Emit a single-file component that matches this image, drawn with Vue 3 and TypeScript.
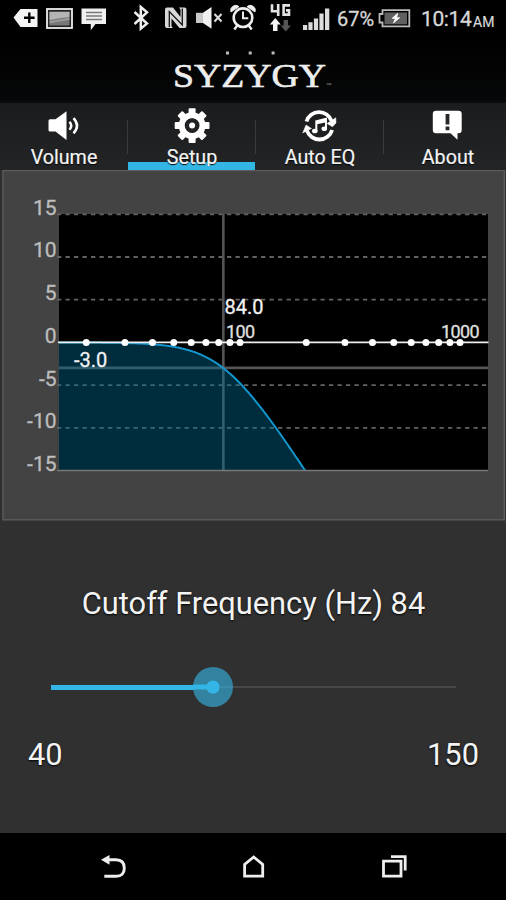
<script setup lang="ts">
import { ref, computed } from 'vue'

const cutoff = ref(84)
const minHz = 40
const maxHz = 150
const fraction = computed(() => (cutoff.value - minHz) / (maxHz - minHz))

const tabs = ['Volume', 'Setup', 'Auto EQ', 'About']
const active = 'Setup'

const plot = { left: 59, right: 488, top: 214, bottom: 470 }
const zeroY = 342.4
const xOf = (hz: number) => 240 + 220 * Math.log10(hz / 100)
const yOf = (db: number) => zeroY - db * 8.54

const levels = [15, 10, 5, 0, -5, -10, -15]
const dashed = [15, 10, 5, -5, -10]
const ticks = [20, 30, 40, 50, 60, 70, 80, 90, 100, 200, 300, 400, 500, 600, 700, 800, 900, 1000]

// Second-order low-pass magnitude in dB
const gain = (hz: number) => -10 * Math.log10(1 + Math.pow(hz / cutoff.value, 4))

const curve = computed(() => {
  const points: string[] = []
  for (let x = plot.left; x <= plot.right; x += 1) {
    const y = yOf(gain(100 * Math.pow(10, (x - 240) / 220)))
    if (y > plot.bottom) {
      points.push(`305.3,${plot.bottom}`)
      break
    }
    points.push(`${x},${y.toFixed(2)}`)
  }
  return points.join(' ')
})
const area = computed(() => `${plot.left},${plot.bottom} ${curve.value}`)
</script>

<template>
  <div class="screen">
    <div class="status">
      <svg class="tag" viewBox="13 0 26 38" width="26" height="38">
        <path d="M13.5 17.6 20.5 9H37.5V27H20.5Z" fill="#f4f4f4" />
        <path d="M29.3 12.5v10.6M24 17.8h10.6" stroke="#000" stroke-width="2.4" />
      </svg>
      <svg class="photo" viewBox="46 0 27 38" width="27" height="38">
        <rect x="47" y="9" width="25" height="19" fill="#222" stroke="#eee" stroke-width="1.8" />
        <rect x="49.5" y="11.5" width="20" height="14" fill="#777" />
        <path d="M49.5 12h20v5l-8 1-12 2z" fill="#b5b5b5" />
        <path d="M49.5 21l10-1.5 10-2v2.5l-10 1.5-10 2z" fill="#999" />
      </svg>
      <svg class="message" viewBox="81 0 26 38" width="26" height="38">
        <path d="M81.5 8.5H106V24H95.5L90.8 30.2V24H81.5Z" fill="#f0f0f0" />
        <path d="M86 12.5h16M86 16h16M86 19.5h16" stroke="#777" stroke-width="1.4" />
      </svg>
      <svg class="bluetooth" viewBox="133 0 16 38" width="16" height="38">
        <path d="M134.5 12 147 23.5 140.8 28.6V7L147 12.3 134.5 24" fill="none" stroke="#eee" stroke-width="2.5" />
      </svg>
      <svg class="nfc" viewBox="165 0 22 38" width="22" height="38">
        <path d="M167 7.5H173L180.5 17V9.5L179 7.5H184.5Q186.5 7.5 186.5 9.5V26Q186.5 28 184.5 28H179.5L171.5 18.5V26.5L173 28H167Q165 28 165 26V9.5Q165 7.5 167 7.5Z" fill="#d8d8d8" />
        <path d="M169.3 27V11.5L182.3 25V8.5" fill="none" stroke="#111" stroke-width="1.3" />
      </svg>
      <svg class="mute" viewBox="195 0 28 38" width="28" height="38">
        <path d="M196 12.8h7V23h-7z" fill="#c8c8c8" />
        <path d="M203 12.8 211.5 7v21.8L203 23z" fill="#f0f0f0" />
        <path d="M214.5 14l7 7.5M221.5 14l-7 7.5" stroke="#ddd" stroke-width="2" />
      </svg>
      <svg class="alarm" viewBox="230 0 26 38" width="26" height="38">
        <circle cx="243" cy="17.7" r="9.3" fill="none" stroke="#eee" stroke-width="2.6" />
        <path d="M243 11.5v6.8h5.3" fill="none" stroke="#eee" stroke-width="2" />
        <path d="M231 12a5 5 0 0 1 8-5.4zM255 12a5 5 0 0 0-8-5.4z" fill="#eee" stroke="#eee" />
        <path d="M237.3 25.5l-3 4M248.7 25.5l3 4" stroke="#eee" stroke-width="2.4" />
      </svg>
      <svg class="network" viewBox="269 0 23 38" width="23" height="38">
        <path d="M272 4.2V11.2h7.5M278.2 4V16M290 5.4h-6.4v9.2h5.4v-4.2h-3" fill="none" stroke="#e2e2e2" stroke-width="2.6" />
        <path d="M275.3 18 280.8 24.5H277.5V31H273V24.5H269.8Z" fill="#f3f3f3" />
        <path d="M285.8 31.5 291 25.5H288V20H283.6V25.5H280.6Z" fill="#555" />
      </svg>
      <svg class="signal" viewBox="302 0 28 38" width="28" height="38">
        <path d="M303 25h4.2v5H303zM308.4 22.2h4.2V30h-4.2zM313.9 18.5h4.2V30h-4.2zM319.4 13.5h4.2V30h-4.2zM325 8.5h4.3V30h-4.3z" fill="#ddd" />
      </svg>
      <span class="percent">67%</span>
      <svg class="battery" viewBox="378 0 33 38" width="33" height="38">
        <path d="M382.5 10.2H409.3V26.4H382.5V22.5H379.5V14H382.5Z" fill="none" stroke="#bbb" stroke-width="1.8" />
        <path d="M384.5 12.5h22.5v11.8h-22.5z" fill="#606060" />
        <path d="M397.5 13.5 392.3 18.3h3.4L393.5 22.8 399.5 17.8h-3z" fill="#fff" stroke="#fff" />
      </svg>
      <span class="clock">10:14</span>
      <span class="meridiem">AM</span>
    </div>

    <header class="brand">
      <svg viewBox="158 38 190 65" width="190" height="65">
        <path d="M226 51.4h3v3h-3zM248.7 51.4h3v3h-3zM271.6 51.4h3v3h-3z" fill="#bbb" />
        <text x="173" y="87" class="wordmark" textLength="153" lengthAdjust="spacingAndGlyphs">SYZYGY</text>
        <text x="325.5" y="87" class="trademark">™</text>
      </svg>
    </header>

    <nav class="tabs">
      <div v-for="tab in tabs" :key="tab" class="tab" :class="{ active: tab === active }">
        <svg v-if="tab === 'Volume'" viewBox="46 106 36 38" width="36" height="38">
          <path d="M50 119.3H55.5L66.5 111.3V140L55.5 131.5H50Q48.5 131.5 48.5 130V120.8Q48.5 119.3 50 119.3Z" fill="#fff" />
          <path d="M69.5 121.7Q73 125.7 69.5 129.7M73.5 118.2Q80.5 125.7 73.5 133.3" fill="none" stroke="#fff" stroke-width="2.5" />
        </svg>
        <svg v-else-if="tab === 'Setup'" viewBox="174 106 36 38" width="36" height="38">
          <g fill="#fff">
            <rect v-for="n in 8" :key="n" x="188.6" y="108.2" width="7" height="8" rx="1" :transform="`rotate(${n * 45} 192.1 125.6)`" />
          </g>
          <circle cx="192.1" cy="125.6" r="10.2" fill="none" stroke="#fff" stroke-width="6.4" />
          <circle cx="192.1" cy="125.6" r="5.2" fill="none" stroke="#202224" stroke-width="4.4" />
          <circle cx="192.1" cy="125.6" r="3" fill="#fff" />
        </svg>
        <svg v-else-if="tab === 'Auto EQ'" viewBox="302 106 36 38" width="36" height="38">
          <g fill="none" stroke="#fff" stroke-width="3.8">
            <path d="M306.5 121.5A13.2 13.2 0 0 1 331.6 121" />
            <path d="M332.1 130A13.2 13.2 0 0 1 306.9 130.5" />
          </g>
          <path d="M327 123.5 335.8 117.8 336 123 332.5 126.8ZM302.7 133 306 125 311.5 128.5Z" fill="#fff" stroke="#fff" stroke-width=".5" />
          <path d="M316.3 131V121.3L326 118.8V128.5" fill="none" stroke="#fff" stroke-width="2" />
          <path d="M316 121l10.4-2.3v3.5L316 124.5z" fill="#fff" />
          <ellipse cx="314.8" cy="131" rx="2.8" ry="2.3" fill="#fff" />
          <ellipse cx="324.3" cy="128.8" rx="2.8" ry="2.3" fill="#fff" />
        </svg>
        <svg v-else viewBox="430 106 36 38" width="36" height="38">
          <path d="M436 110.7H458.5Q461.7 110.7 461.7 114V130Q461.7 133.2 458.5 133.2H457.5V139.7L450.5 133.2H436Q432.8 133.2 432.8 130V114Q432.8 110.7 436 110.7Z" fill="#fff" />
          <path d="M447.5 114v10.5M447.5 126.5v3.8" stroke="#25282a" stroke-width="3.8" />
        </svg>
        <span class="label">{{ tab }}</span>
      </div>
    </nav>

    <main class="content">
      <svg class="chart" viewBox="0 170 506 352" width="506" height="352">
        <rect x="3" y="170.5" width="501.3" height="349.3" class="panel" />
        <rect :x="plot.left" :y="plot.top" width="429" height="256.5" fill="#000" />
        <line v-for="db in dashed" :key="db" x1="57" x2="488" :y1="yOf(db)" :y2="yOf(db)" class="grid" />
        <path :d="`M${xOf(84)} 214V470M59 367.9H488`" class="marker" />
        <polygon :points="area" class="area" />
        <polyline :points="curve" class="curve" />
        <path d="M57 470.5H488" stroke="#777" stroke-width="1.6" />
        <path :d="`M58 ${zeroY}H488.5`" stroke="#eee" stroke-width="1.8" />
        <circle v-for="hz in ticks" :key="hz" :cx="xOf(hz)" :cy="zeroY" r="3.5" fill="#fff" />
        <text v-for="db in levels" :key="db" x="56.5" :y="yOf(db) + 0.4" class="level">{{ db }}</text>
        <text x="224.5" y="314" class="value">{{ cutoff.toFixed(1) }}</text>
        <text x="74" y="367.3" class="value">-3.0</text>
        <text x="226" y="337.5" class="hz" textLength="29">100</text>
        <text x="441" y="337.5" class="hz" textLength="38.5">1000</text>
      </svg>

      <h1 class="title">Cutoff Frequency (Hz) {{ cutoff }}</h1>

      <div class="slider">
        <div class="filled" :style="{ width: fraction * 100 + '%' }">
          <svg class="thumb" viewBox="0 0 40 40" width="40" height="40">
            <circle cx="20" cy="20" r="20" fill="#33b5e5" fill-opacity=".62" />
            <path d="M0 20H20" stroke="#33b5e5" stroke-width="5" />
            <circle cx="20" cy="20" r="6.6" fill="#33b5e5" />
          </svg>
        </div>
      </div>

      <div class="range">
        <span>{{ minHz }}</span>
        <span>{{ maxHz }}</span>
      </div>
    </main>

    <footer class="nav">
      <svg viewBox="100 853 28 28" width="28" height="28">
        <path d="M108 859.8H116Q124.3 860 124.3 868.2T116 876.3H104.3" fill="none" stroke="#eee" stroke-width="2.9" />
        <path d="M101 859.8 109.5 855V864.7Z" fill="#eee" />
      </svg>
      <svg viewBox="240 853 28 28" width="28" height="28">
        <path d="M244.6 876.2V864.5L253.7 857 262.7 864.5V876.2Z" fill="none" stroke="#eee" stroke-width="2.8" />
      </svg>
      <svg viewBox="380 853 28 28" width="28" height="28">
        <path d="M383.5 861.2H401V876.2H383.5ZM391 856.6H405.2V870.5" fill="none" stroke="#eee" stroke-width="2.8" />
      </svg>
    </footer>
  </div>
</template>

<style>
body {
  margin: 0;
  background: #000;
}
</style>

<style scoped>
.screen {
  width: 506px;
  height: 900px;
  display: flex;
  flex-direction: column;
  overflow: hidden;
  background: #000;
  color: #f4f4f4;
  font-family: Roboto, "Liberation Sans", sans-serif;
}
svg {
  display: block;
  flex: none;
}
.status {
  display: flex;
  height: 38px;
  padding-left: 13px;
  line-height: 39px;
  color: #d8d8d8;
}
.photo { margin-left: 7px; }
.message { margin-left: 8px; }
.bluetooth { margin-left: 26px; }
.nfc { margin-left: 16px; }
.mute { margin-left: 8px; }
.alarm { margin-left: 7px; }
.network { margin-left: 13px; }
.signal { margin-left: 10px; }
.percent {
  width: 41px;
  margin-left: 7px;
  font-size: 20px;
  -webkit-text-stroke: 0.3px;
}
.clock {
  width: 52px;
  margin-left: 10px;
  font-size: 21px;
  letter-spacing: -0.4px;
  -webkit-text-stroke: 0.3px;
}
.meridiem {
  font-size: 14px;
  line-height: 44px;
  -webkit-text-stroke: 0.2px;
}
.brand {
  display: flex;
  justify-content: center;
  height: 65px;
  background: linear-gradient(#000, #060708 95%, #0b0c0d);
}
.wordmark {
  font: 34px "Liberation Serif", serif;
  fill: #eee;
  stroke: #eee;
  stroke-width: 0.6px;
}
.trademark {
  font: 6px "Liberation Sans", sans-serif;
  fill: #888;
}
.tabs {
  display: grid;
  grid-template-columns: 128px 128px 128px 122px;
  height: 67px;
  background: linear-gradient(#1b1c1d, #222426);
}
.tab {
  position: relative;
  display: flex;
  flex-direction: column;
  align-items: center;
  width: 128px;
  height: 67px;
  padding-top: 3px;
  box-sizing: border-box;
  background: linear-gradient(#393b3d, #393b3d) right 17px / 1px 34px no-repeat;
}
.tab:last-child {
  background: none;
}
.tab.active {
  background:
    linear-gradient(#33b5e5, #33b5e5) left bottom / 127px 8px no-repeat,
    linear-gradient(#393b3d, #393b3d) right 17px / 1px 34px no-repeat;
}
.tab.active::after {
  content: "";
  position: absolute;
  left: 0;
  bottom: 0;
  width: 127px;
  height: 4px;
  background: #33b5e5;
}
.label {
  height: 26px;
  font-size: 19.7px;
  line-height: 27px;
  text-shadow: 0 1px 1px #000;
  -webkit-text-stroke: 0.2px;
}
.content {
  display: flex;
  flex-direction: column;
  height: 663px;
  background: #303030;
}
.panel {
  fill: #434343;
  stroke: #5c5c5c;
  stroke-width: 1.4;
}
.grid {
  stroke: #626262;
  stroke-width: 1.8;
  stroke-dasharray: 4.3 4.2;
}
.marker {
  fill: none;
  stroke: #545454;
  stroke-width: 2.6;
}
.area {
  fill: #00709b;
  fill-opacity: 0.4;
}
.curve {
  fill: none;
  stroke: #1495cb;
  stroke-width: 2;
}
.level {
  font-size: 21px;
  fill: #bdbdbd;
  stroke: #bdbdbd;
  stroke-width: 0.3px;
  text-anchor: end;
}
.value {
  font-size: 20px;
  fill: #f2f2f2;
  stroke: #f2f2f2;
  stroke-width: 0.3px;
}
.hz {
  font-size: 18px;
  fill: #e0e0e0;
  stroke: #e0e0e0;
  stroke-width: 0.3px;
}
.title {
  margin: 59px 0 0;
  padding-left: 1px;
  font-size: 30.8px;
  font-weight: 400;
  line-height: 46px;
  text-align: center;
  text-shadow: 0 1px 2px #000;
}
.slider {
  height: 40px;
  margin: 40px 50px 0 51px;
  background: linear-gradient(#474747, #474747) 0 19px / 100% 2px no-repeat;
}
.filled {
  display: flex;
  justify-content: flex-end;
  height: 40px;
  background: linear-gradient(#33b5e5, #33b5e5) 0 17.5px / calc(100% - 19px) 5px no-repeat;
}
.thumb {
  margin-right: -20px;
}
.range {
  display: flex;
  justify-content: space-between;
  margin-top: 25px;
  padding: 0 27px 0 28px;
  font-size: 30.8px;
  line-height: 46px;
  text-shadow: 0 1px 2px #000;
}
.nav {
  display: flex;
  flex: 1;
  justify-content: space-between;
  padding: 20px 98px 0 100px;
}
</style>
